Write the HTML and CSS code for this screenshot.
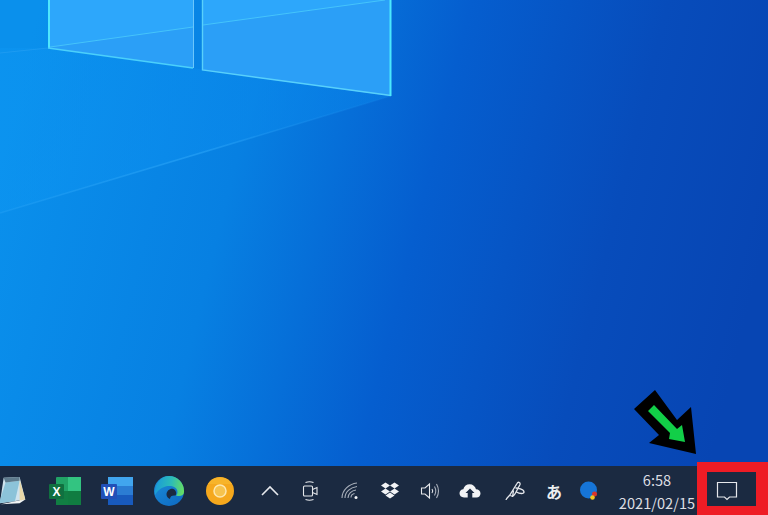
FILE: index.html
```html
<!DOCTYPE html>
<html lang="ja">
<head>
<meta charset="utf-8">
<title>Desktop</title>
<link rel="stylesheet" href="styles.css">
</head>
<body>
<div class="desktop">
  <main class="wallpaper">
    <svg class="wallpaper-art" viewBox="0 0 768 466" preserveAspectRatio="none" aria-hidden="true">
      <defs>
        <linearGradient id="base" x1="0" y1="0.35" x2="1" y2="0.5">
          <stop offset="0" stop-color="#0a90ec"/>
          <stop offset="0.3" stop-color="#0780e2"/>
          <stop offset="0.55" stop-color="#055ecf"/>
          <stop offset="0.8" stop-color="#074cbb"/>
          <stop offset="1" stop-color="#0745b3"/>
        </linearGradient>
        <linearGradient id="lightwedge" x1="0" y1="0" x2="1" y2="0">
          <stop offset="0" stop-color="#0d96f2" stop-opacity="0.5"/>
          <stop offset="1" stop-color="#0a84ea" stop-opacity="0.55"/>
        </linearGradient>
        <linearGradient id="beam" x1="1" y1="0" x2="0" y2="0">
          <stop offset="0" stop-color="#1d8ff0" stop-opacity="0.1"/>
          <stop offset="0.5" stop-color="#2aa4f7" stop-opacity="0.6"/>
          <stop offset="1" stop-color="#2aa4f7" stop-opacity="0.35"/>
        </linearGradient>
      </defs>
      <rect width="768" height="466" fill="url(#base)"/>
      <polygon points="0,48 48,48 391,96 0,213" fill="url(#lightwedge)"/>
      <line x1="391" y1="96" x2="0" y2="213" stroke="url(#beam)" stroke-width="1.500"/>
      <line x1="0" y1="53" x2="48" y2="48" stroke="#36a8f6" stroke-width="1" opacity="0.4"/>
      <polygon points="48,0 193,0 193,68 48,48" fill="#2b9ff7"/>
      <polygon points="202,0 391,0 391,96 202,70" fill="#2b9ff7"/>
      <polygon points="48,0 193,0 193,27 48,47" fill="#2da7fb"/>
      <polygon points="202,0 385,0 202,25" fill="#2da7fb"/>
      <line x1="49" y1="0" x2="49" y2="48" stroke="#4fe6fd" stroke-width="2"/>
      <line x1="48" y1="48" x2="193" y2="68" stroke="#4bd0fb" stroke-width="1.500"/>
      <line x1="193.500" y1="0" x2="193.500" y2="68" stroke="#6cc6fb" stroke-width="1"/>
      <polyline points="202.500,0 202.500,70 391,95.500" fill="none" stroke="#58d0fb" stroke-width="1.400"/>
      <line x1="390.500" y1="0" x2="390.500" y2="96" stroke="#4be8fd" stroke-width="2"/>
      <line x1="50" y1="47" x2="193" y2="27" stroke="#45c4fb" stroke-width="1"/>
      <line x1="203" y1="25" x2="385" y2="0" stroke="#45c4fb" stroke-width="1"/>
    </svg>
  </main>

  <footer class="taskbar">
    <div class="apps">
      <div class="app">
        <svg class="icon-app" viewBox="1 -1 34 34" aria-hidden="true">
          <polygon points="7,2 24,1 30,25 3,29" fill="#cfe3ee"/>
          <polygon points="2,29 9,7 24,5 19,27" fill="#8cc3d9"/>
          <polygon points="24,4 30,25 24,27" fill="#e9d8a8"/>
          <polygon points="7,2 24,1 24,5 9,7" fill="#5d7a8c"/>
          <polygon points="19,27 30,25 24,29 4,30" fill="#f2f5f5"/>
        </svg>
      </div>
      <div class="app">
        <svg class="icon-app" viewBox="0 0 32 32" aria-hidden="true">
          <rect x="7" y="2" width="25" height="28" rx="1" fill="#21a366"/>
          <rect x="19" y="2" width="13" height="14" fill="#33c481"/>
          <rect x="7" y="16" width="12" height="14" fill="#117e43"/>
          <rect x="19" y="16" width="13" height="14" fill="#107c41"/>
          <rect x="0" y="9" width="15" height="15" rx="1" fill="#107040"/>
          <text class="app-letter" x="7.500" y="21" text-anchor="middle">X</text>
        </svg>
      </div>
      <div class="app">
        <svg class="icon-app" viewBox="0 0 32 32" aria-hidden="true">
          <rect x="7" y="2" width="25" height="28" rx="1" fill="#2b7cd3"/>
          <rect x="7" y="2" width="25" height="9" fill="#41a5ee"/>
          <rect x="7" y="20" width="25" height="10" fill="#185abd"/>
          <rect x="0" y="9" width="16" height="15" rx="1" fill="#2150b8"/>
          <text class="app-letter" x="8" y="21" text-anchor="middle">W</text>
        </svg>
      </div>
      <div class="app">
        <svg class="icon-app" viewBox="0 0 32 32" aria-hidden="true">
          <defs>
            <linearGradient id="edge-body" x1="0" y1="0" x2="0.800" y2="1">
              <stop offset="0" stop-color="#1d8ed8"/>
              <stop offset="1" stop-color="#0e6cc4"/>
            </linearGradient>
            <linearGradient id="edge-top" x1="0" y1="0.400" x2="1" y2="0.500">
              <stop offset="0" stop-color="#1a9ad8"/>
              <stop offset="0.550" stop-color="#2cbcb8"/>
              <stop offset="1" stop-color="#66dc62"/>
            </linearGradient>
          </defs>
          <circle cx="16" cy="16" r="15" fill="url(#edge-body)"/>
          <path d="M16 1 A15 15 0 0 1 31 17 C31 20.500 27 22 23 20.500 C25.500 18 25 13 20 11.500 C14 10 7 12 2 20 C1 9 8 1 16 1Z" fill="url(#edge-top)"/>
          <path d="M13.500 19.500 C13.500 15.500 17.500 13 20.500 14 C23 15 24 18.500 22.500 20.500 C19.500 20 17 21 17 24 C15 23 13.500 21.500 13.500 19.500Z" fill="#1b2a41"/>
        </svg>
      </div>
      <div class="app">
        <svg class="icon-app" viewBox="0 0 32 32" aria-hidden="true">
          <circle cx="16" cy="16" r="14" fill="#f5a81d"/>
          <path d="M4 9 A14 14 0 0 1 28 9 L16 9Z" fill="#f7b42a"/>
          <circle cx="16" cy="16" r="6" fill="#f6c34e" stroke="#fde7ae" stroke-width="1.500"/>
        </svg>
      </div>
    </div>

    <div class="tray">
      <div class="tray-item">
        <svg class="icon-tray" viewBox="0 0 20 20" aria-hidden="true"><path class="stroke" d="M2 14 L10 6 L18 14"/></svg>
      </div>
      <div class="tray-item">
        <svg class="icon-tray" viewBox="0 0 20 20" aria-hidden="true">
          <path class="stroke thin" d="M5.500 1.500 Q9.500 0 13.500 1.500 M5.500 18.500 Q9.500 20 13.500 18.500"/>
          <rect class="stroke thin" x="3.500" y="5" width="9" height="10" rx="1"/>
          <path class="stroke thin" d="M12.500 8.500 L17 6.500 V13.500 L12.500 11.500"/>
        </svg>
      </div>
      <div class="tray-item">
        <svg class="icon-tray" viewBox="0 0 20 20" aria-hidden="true">
          <path class="stroke thin faint" d="M2 17 C2 9 9 3 17 2 M5 17 C5 11 10 6.500 17 5.500 M8 17 C8 13 11.500 9.500 16 9 M11 16.500 C11 14.500 12.500 13 14.500 12.500"/>
          <circle class="fill" cx="16" cy="16.500" r="1.500"/>
        </svg>
      </div>
      <div class="tray-item">
        <svg class="icon-tray" viewBox="0 0 20 20" aria-hidden="true">
          <path class="fill" d="M5.500 1.500 L10 4.500 L5.500 7.500 L1 4.500Z M14.500 1.500 L19 4.500 L14.500 7.500 L10 4.500Z M5.500 7.500 L10 10.500 L5.500 13.500 L1 10.500Z M14.500 7.500 L19 10.500 L14.500 13.500 L10 10.500Z M5.500 14.500 L10 11.500 L14.500 14.500 L10 17.500Z"/>
        </svg>
      </div>
      <div class="tray-item">
        <svg class="icon-tray" viewBox="0 0 20 20" aria-hidden="true">
          <path class="stroke thin" d="M1.500 7 H5 L9.500 3 V17 L5 13 H1.500Z"/>
          <path class="stroke thin" d="M12 8 Q13.500 10 12 12"/>
          <path class="stroke thin faint" d="M14.500 5.500 Q17 10 14.500 14.500 M16.500 3 Q20.500 10 16.500 17"/>
        </svg>
      </div>
      <div class="tray-item">
        <svg class="icon-tray icon-cloud" viewBox="0 0 22 20" aria-hidden="true">
          <path class="fill" fill-rule="evenodd" d="M5 16.500 C2 16.500 0.500 14.500 0.500 12.300 C0.500 10 2.200 8.300 4.300 8.200 C5 5.300 7.600 3.300 10.600 3.300 C13.800 3.300 16.300 5.400 17 8.200 C19.600 8.300 21.500 10 21.500 12.400 C21.500 14.700 19.800 16.500 17.500 16.500 H13.300 V12 H15.500 L11 7.500 L6.500 12 H8.700 V16.500Z"/>
        </svg>
      </div>
      <div class="tray-item pen">
        <svg class="icon-tray" viewBox="0 0 20 20" aria-hidden="true">
          <path class="stroke pen-line" d="M1 19 C1 17.500 2.500 16.500 4.500 14.500 L12 2.500 C13 0.500 15.500 1 15 3.500 L10.500 12 C9 15 7.500 16 5.500 14.500 M10.500 7 C14 7 19 8.500 19 11 C19 13 14.500 13 11.500 11 M8.500 9.500 L7.500 16"/>
        </svg>
      </div>
      <div class="tray-item ime">
        <span class="ime-char">あ</span>
      </div>
      <div class="tray-item badge-icon">
        <svg class="icon-tray" viewBox="0 0 20 20" aria-hidden="true">
          <circle cx="9.500" cy="9" r="8.500" fill="#1675d8"/>
          <circle cx="15.500" cy="13" r="2.500" fill="#d9352a"/>
          <circle cx="13.500" cy="16.500" r="2.300" fill="#f3c621"/>
        </svg>
      </div>
      <div class="clock">
        <span>6:58</span>
        <span>2021/02/15</span>
      </div>
      <div class="action-center">
        <svg class="icon-action" viewBox="0 0 22 20" aria-hidden="true">
          <path class="stroke action-line" d="M1.500 1.500 H20.500 V16 H13.500 L11 18.500 L8.500 16 H1.500Z"/>
        </svg>
      </div>
    </div>
  </footer>

  <svg class="callout-arrow" viewBox="0 0 72 72" aria-hidden="true">
    <polygon points="21,6 0,25 25,51 15,59 62,70 57,23 43,36" fill="#000"/>
    <polygon points="20,21 14,27 36,49 35,55 51,58 48,41 43,45" fill="#12cf48"/>
  </svg>
  <div class="callout-box"></div>
</div>
</body>
</html>
```

FILE: styles.css
```css
* { box-sizing: border-box; }

html, body {
  margin: 0;
  padding: 0;
  height: 100%;
  overflow: hidden;
}

.desktop {
  position: relative;
  width: 768px;
  height: 515px;
  display: flex;
  flex-direction: column;
  overflow: hidden;
  background: #0760cc;
  font-family: "Noto Sans CJK JP", "Noto Sans", sans-serif;
}

.wallpaper {
  flex: 1;
  min-height: 0;
}

.wallpaper-art {
  display: block;
  width: 100%;
  height: 100%;
}

.taskbar {
  flex: 0 0 49px;
  display: flex;
  align-items: center;
  background: #1b2a41;
  color: #e4e6ea;
}

.apps {
  display: flex;
  margin-left: -12px;
}

.app {
  width: 51.6px;
  height: 49px;
  display: flex;
  align-items: center;
  justify-content: center;
}

.icon-app {
  width: 32px;
  height: 32px;
  display: block;
}

.app-letter {
  font-family: "Liberation Sans", sans-serif;
  font-weight: 700;
  font-size: 12px;
  fill: #fff;
}

.tray {
  display: flex;
  align-items: center;
  margin-left: 4px;
}

.tray-item {
  width: 40px;
  height: 49px;
  display: flex;
  align-items: center;
  justify-content: center;
}

.tray-item.pen { width: 46px; margin-left: 2px; }
.tray-item.ime { width: 32px; }
.tray-item.badge-icon { width: 38px; }

.icon-tray {
  width: 20px;
  height: 20px;
  display: block;
}

.icon-cloud { width: 22px; }

.stroke {
  fill: none;
  stroke: #e6e8ec;
  stroke-width: 1.600;
}

.stroke.thin { stroke-width: 1.100; }
.stroke.faint { stroke: #a9b0bb; }
.stroke.pen-line { stroke-width: 1.300; }
.stroke.action-line { stroke-width: 1.200; }
.fill { fill: #f2f3f5; }

.ime-char {
  font-size: 16px;
  line-height: 1;
  font-weight: 700;
  color: #eceef0;
}

.clock {
  width: 82px;
  margin-left: 8px;
  display: flex;
  flex-direction: column;
  align-items: center;
  font-size: 14.6px;
  line-height: 23px;
  white-space: nowrap;
  color: #dcdee2;
}

.action-center {
  flex: 0 0 auto;
  width: 24px;
  margin-left: 17px;
  display: flex;
  justify-content: center;
}

.icon-action {
  width: 22px;
  height: 20px;
  display: block;
}

.callout-arrow {
  position: absolute;
  left: 634px;
  top: 384px;
  width: 72px;
  height: 72px;
}

.callout-box {
  position: absolute;
  left: 697px;
  top: 462px;
  width: 71px;
  height: 53px;
  border-style: solid;
  border-color: #ee1c25;
  border-width: 10px 12px 9px 10px;
}
```
